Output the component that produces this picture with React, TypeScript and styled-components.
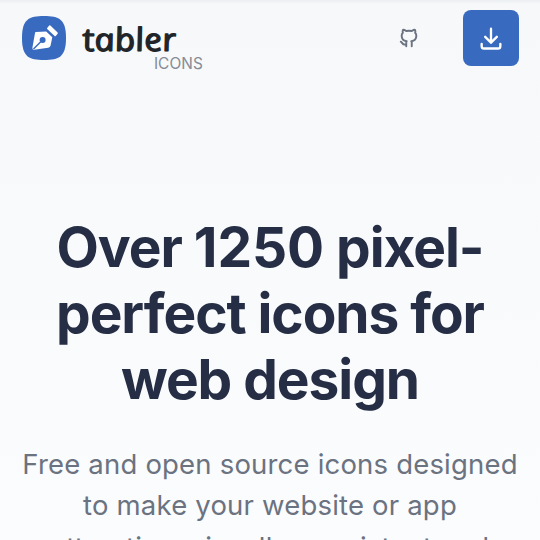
import React from "react";
import styled, { createGlobalStyle } from "styled-components";

const GlobalStyle = createGlobalStyle`
  * { box-sizing: border-box; }
  html, body { margin: 0; height: 100%; overflow: hidden; }
  body { font-family: Inter, "Liberation Sans", sans-serif; }
`;

const Page = styled.div`
  height: 540px;
  overflow: hidden;
  background:
    linear-gradient(rgba(30, 41, 59, 0.05), rgba(30, 41, 59, 0) 4px),
    linear-gradient(#f6f8fa, #fbfcfe);
`;

const Header = styled.header`
  display: flex;
  align-items: flex-start;
  justify-content: space-between;
  height: 76px;
  padding: 10px 21px 0 22px;
`;

const Brand = styled.a`
  display: flex;
  padding-top: 6px;
`;

const LogoMark = styled.svg`
  display: block;
  width: 44px;
  height: 44px;
`;

const BrandText = styled.div`
  display: flex;
  flex-direction: column;
  width: 125px;
  margin-left: 12px;
`;

const Wordmark = styled.svg`
  display: block;
  width: 110px;
  height: 39px;
  overflow: visible;
  font-family: "Open Sans", "Noto Sans", sans-serif;
  font-size: 32px;
  font-style: italic;
  font-weight: 500;
  fill: #212529;
  stroke: #212529;
  stroke-width: 1.2px;
  stroke-linejoin: round;
`;

const Product = styled.span`
  align-self: flex-end;
  color: #868b96;
  font-size: 15.4px;
  line-height: 18px;
  letter-spacing: 0.1px;
`;

const Actions = styled.nav`
  display: flex;
  align-items: center;
  gap: 43px;
`;

const GithubLink = styled.a`
  display: flex;
  color: #6b7280;
`;

const DownloadButton = styled.button`
  display: flex;
  align-items: center;
  justify-content: center;
  width: 56px;
  height: 56px;
  padding: 0;
  border: 0;
  border-radius: 8px;
  background: #386abf;
  color: #fff;
`;

const StrokeIcon = styled.svg<{ $size: number; $weight: number }>`
  display: block;
  width: ${(p) => p.$size}px;
  height: ${(p) => p.$size}px;
  fill: none;
  stroke: currentColor;
  stroke-width: ${(p) => p.$weight};
  stroke-linecap: round;
  stroke-linejoin: round;
`;

const Hero = styled.main`
  padding: 138px 16px 0;
  text-align: center;
`;

const Title = styled.h1`
  margin: 0;
  color: #252e45;
  font-size: 55px;
  font-weight: 700;
  line-height: 66px;
  letter-spacing: -1.05px;
`;

const Count = styled.span`
  letter-spacing: -0.1px;
`;

const Lead = styled.p`
  margin: 32px 0 0;
  color: #6b7280;
  font-size: 27.5px;
  line-height: 41.25px;
  letter-spacing: 0.19px;
  white-space: nowrap;
`;

export default function App() {
  return (
    <Page>
      <GlobalStyle />
      <Header>
        <Brand aria-label="Tabler Icons">
          <LogoMark viewBox="0 0 44 44">
            <path
              d="M22 0C37 0 44 3 44 22S37 44 22 44 0 41 0 22 7 0 22 0Z"
              fill="#386abf"
            />
            <path
              d="M13.8 15.9 24.2 15.5 30.3 21.3 28.6 29.5Q28.2 31.3 26.2 31.8L12.2 33.8Q10 34 10.4 31.8L13 17Q13.2 16 13.8 15.9Z"
              fill="#fff"
            />
            <path d="M11.5 33 19.5 25" stroke="#386abf" strokeWidth="1.4" />
            <circle cx="20.6" cy="24" r="3" fill="#386abf" />
            <path
              d="M27.2 9.4Q27.8 9 28.4 9.5L35.6 16.5Q36.1 17.1 35.6 17.7L33.8 19.9Q33.2 20.4 32.6 19.9L25.2 13.1Q24.8 12.6 25.2 12Z"
              fill="#fff"
            />
          </LogoMark>
          <BrandText>
            <Wordmark viewBox="0 0 110 39">
              <text
                transform="translate(6.5 34.5) skewX(12)"
                textLength="93.500"
                lengthAdjust="spacingAndGlyphs"
              >
                tabler
              </text>
            </Wordmark>
            <Product>ICONS</Product>
          </BrandText>
        </Brand>
        <Actions>
          <GithubLink aria-label="GitHub">
            <StrokeIcon viewBox="0 0 24 24" $size={22} $weight={2.1}>
              <path d="M9 19c-4.3 1.4-4.3-2.5-6-3m12 5v-3.5c0-1 .1-1.4-.5-2 2.8-.3 5.5-1.4 5.5-6a4.6 4.6 0 0 0-1.3-3.2 4.2 4.2 0 0 0-.1-3.2s-1.1-.3-3.5 1.3a12.3 12.3 0 0 0-6.2 0C6.5 2.8 5.4 3.1 5.4 3.1a4.2 4.2 0 0 0-.1 3.2A4.6 4.6 0 0 0 4 9.5c0 4.6 2.7 5.7 5.5 6-.6.6-.6 1.2-.5 2V21" />
            </StrokeIcon>
          </GithubLink>
          <DownloadButton aria-label="Download">
            <StrokeIcon viewBox="0 0 24 24" $size={28} $weight={2}>
              <path d="M4 17v2a2 2 0 0 0 2 2h12a2 2 0 0 0 2-2v-2M7 11l5 5 5-5M12 4v12" />
            </StrokeIcon>
          </DownloadButton>
        </Actions>
      </Header>
      <Hero>
        <Title>
          Over <Count>1250</Count> pixel-
          <br />
          perfect icons for
          <br />
          web design
        </Title>
        <Lead>
          Free and open source icons designed
          <br />
          to make your website or app
          <br />
          attractive, visually consistent and
        </Lead>
      </Hero>
    </Page>
  );
}
